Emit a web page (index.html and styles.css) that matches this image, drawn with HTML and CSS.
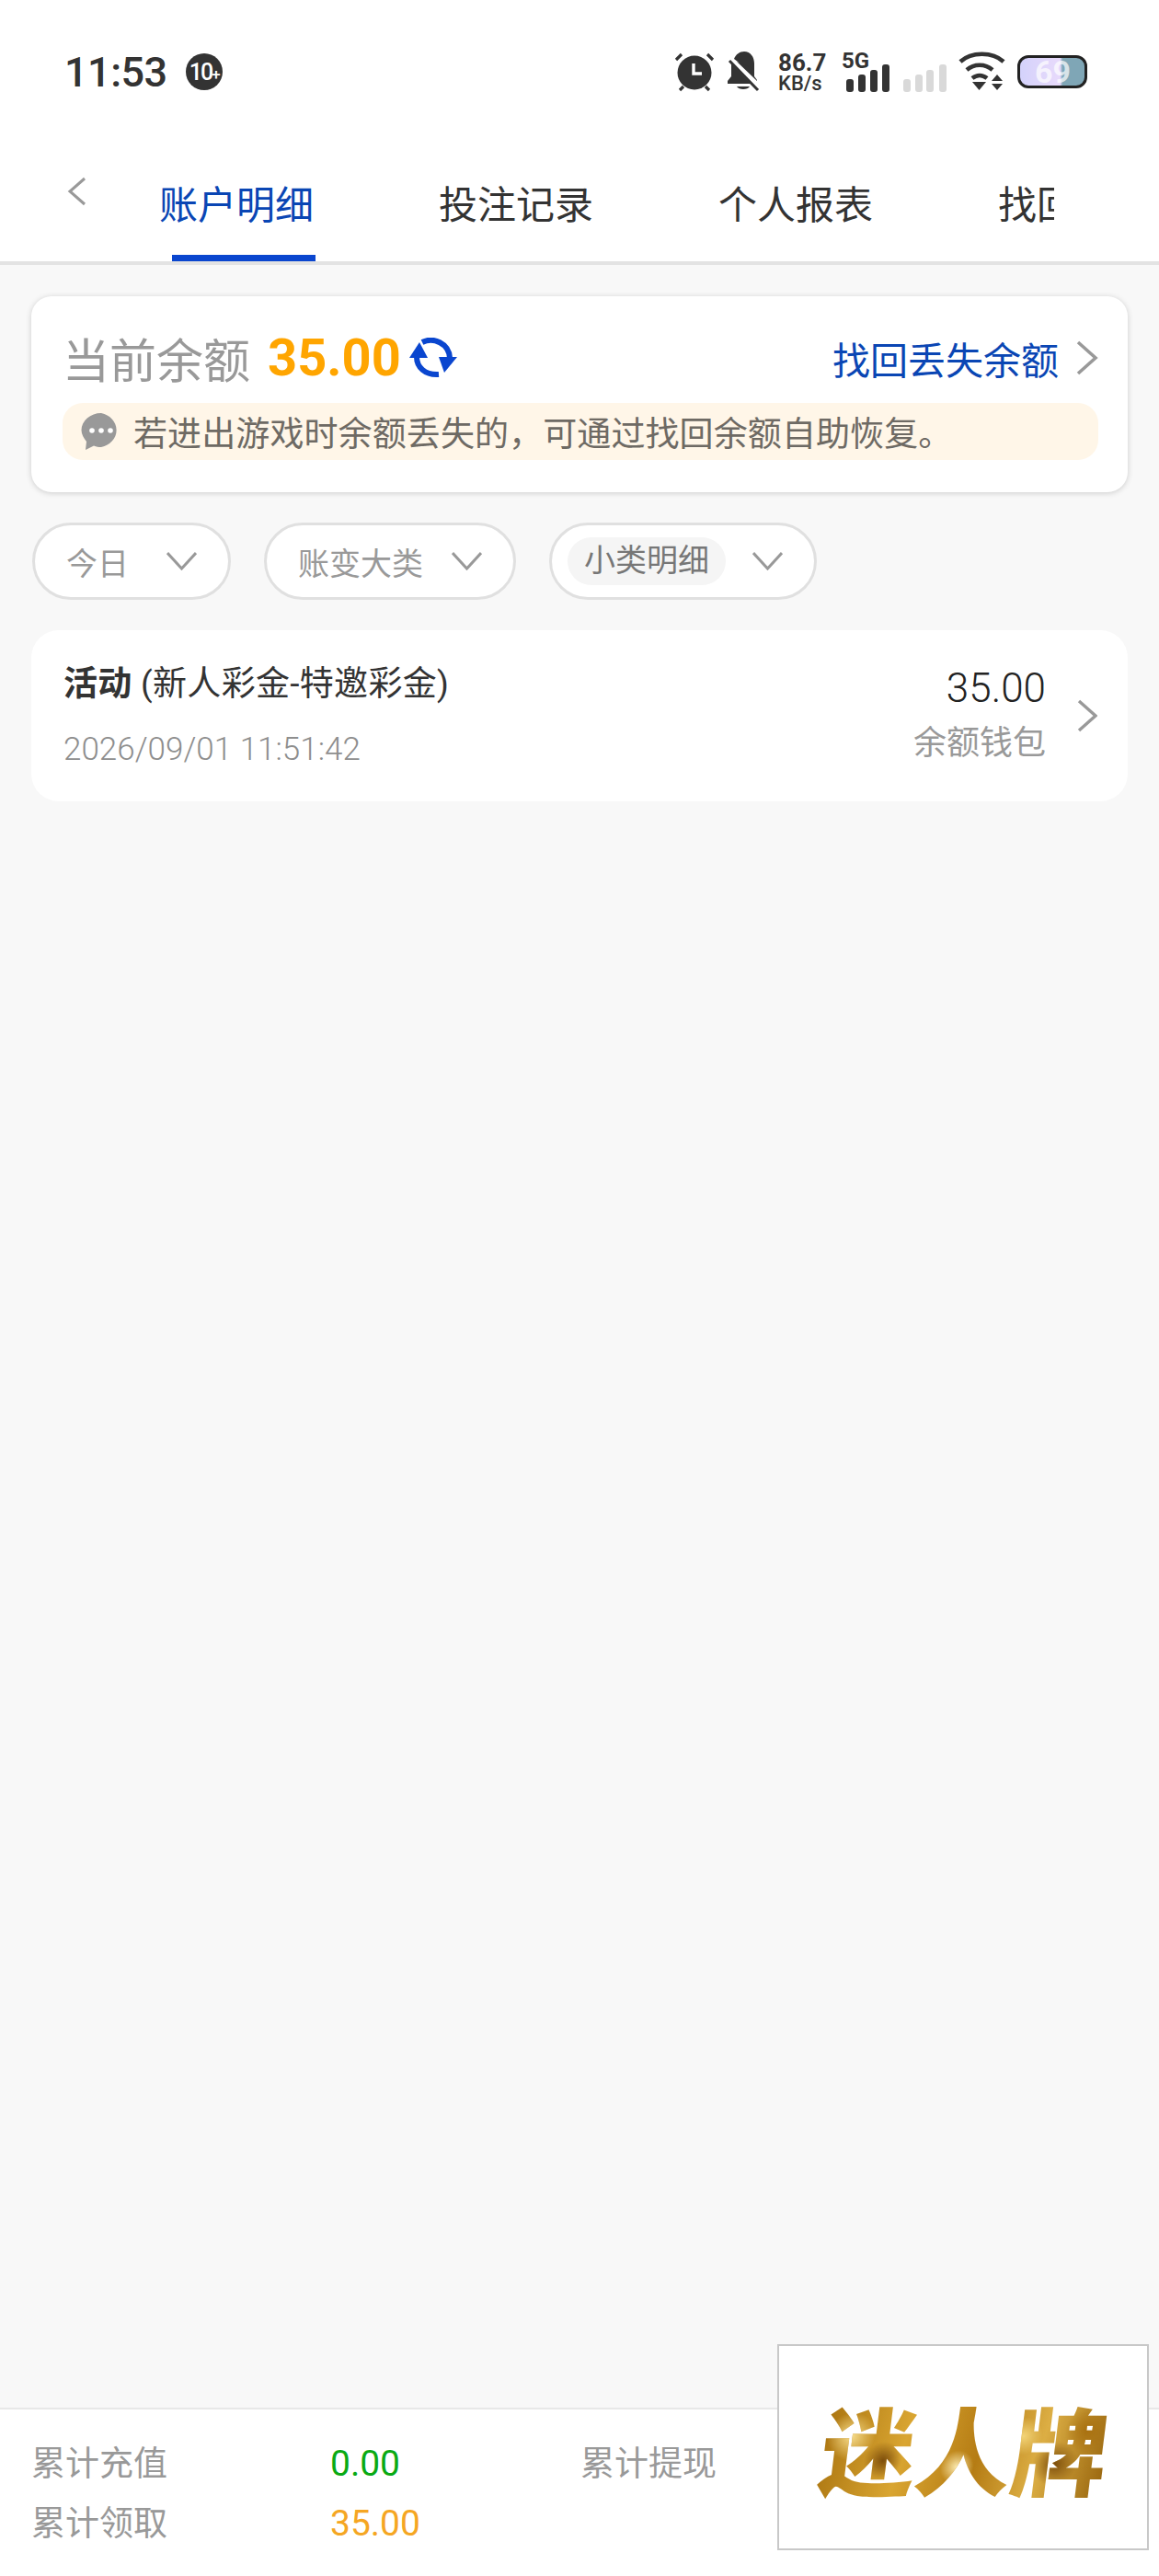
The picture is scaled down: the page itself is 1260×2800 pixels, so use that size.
FILE: index.html
```html
<!DOCTYPE html>
<html lang="zh-CN">
<head>
    <meta charset="UTF-8">
    <meta name="viewport" content="width=device-width, initial-scale=1.0">
    <title>账户明细</title>
    <link rel="stylesheet" href="styles.css">
</head>
<body>
    <header class="top">
        <div class="status">
            <span class="time">11:53</span>
            <span class="badge">10<i>+</i></span>
            <div class="status-right">
                <svg class="ico-alarm" width="44" height="44" viewBox="0 0 44 44">
                    <circle cx="22" cy="23" r="18.5" fill="#333"/>
                    <path d="M21 13v11h9" fill="none" stroke="#fff" stroke-width="3.4"/>
                    <path d="M2 9l6-6M42 9l-6-6M6 42l4-4M38 42l-4-4" fill="none" stroke="#333" stroke-width="3.2"/>
                </svg>
                <svg class="ico-bell" width="36" height="44" viewBox="0 0 36 44">
                    <path d="M3 10L34 42" stroke="#333" stroke-width="3" fill="none"/>
                    <path d="M8 8C10 3 14 0 19 0c7 0 11 6 11 13v12zM5 13l21 22H1v-3l4-5z" fill="#333"/>
                    <path d="M30 19v8l3 4v1L11 11z" fill="#333"/>
                    <path d="M11 38h14c-2 4-12 4-14 0z" fill="#333"/>
                </svg>
                <div class="speed"><b>86.7</b><b>KB/s</b></div>
                <svg class="ico-signal" width="49" height="44" viewBox="0 0 49 44">
                    <text x="-3" y="18" class="net">5G</text>
                    <rect x="2" y="30" width="8" height="14" rx="3" fill="#333"/>
                    <rect x="15" y="25" width="8" height="19" rx="3" fill="#333"/>
                    <rect x="28" y="20" width="8" height="24" rx="3" fill="#333"/>
                    <rect x="41" y="14" width="8" height="30" rx="3" fill="#333"/>
                </svg>
                <svg class="ico-signal2" width="47" height="44" viewBox="0 0 47 44">
                    <rect x="0" y="30" width="8" height="14" rx="3" fill="#d9d9d9"/>
                    <rect x="13" y="25" width="8" height="19" rx="3" fill="#d9d9d9"/>
                    <rect x="25" y="20" width="8" height="24" rx="3" fill="#d9d9d9"/>
                    <rect x="39" y="14" width="8" height="30" rx="3" fill="#d9d9d9"/>
                </svg>
                <svg class="ico-wifi" width="51" height="44" viewBox="0 0 51 44">
                    <path d="M2 11C14 0 37 0 49 11M9 20c8-7 20-7 28 0M15 29c5-4 11-4 16 0" fill="none" stroke="#333" stroke-width="4.6"/>
                    <path d="M15 33h15l-7.500 9z" fill="#333"/>
                    <path d="M36 32l6-7 6 7zM36 35h12l-6 7z" fill="#333"/>
                </svg>
                <div class="battery"><span class="battery-num">69</span></div>
            </div>
        </div>
        <nav class="tabs">
            <svg class="back" width="21" height="32" viewBox="0 0 21 32">
                <path d="M19 2L3 16l16 14" fill="none" stroke="#999" stroke-width="3"/>
            </svg>
            <div class="tab-list">
                <a class="tab active">账户明细</a>
                <a class="tab">投注记录</a>
                <a class="tab">个人报表</a>
                <a class="tab">找回丢失余额</a>
            </div>
        </nav>
    </header>

    <main class="main">
        <section class="card">
            <div class="balance-row">
                <span class="balance-label">当前余额</span>
                <span class="balance-num">35.00</span>
                <svg class="refresh" width="52" height="44" viewBox="0 0 52 44">
                    <path d="M8 21c0 11 9 20 24 19" fill="none" stroke="#0a46cf" stroke-width="6"/>
                    <path d="M11 5L0 22h20z" fill="#0a46cf"/>
                    <path d="M14 5c12-6 29 1 30 17" fill="none" stroke="#0a46cf" stroke-width="6"/>
                    <path d="M38 38L52 21H32z" fill="#0a46cf"/>
                </svg>
                <a class="recover">找回丢失余额</a>
                <svg class="arrow" width="24" height="38" viewBox="0 0 24 38">
                    <path d="M2 2l19 17L2 36" fill="none" stroke="#999" stroke-width="3.600"/>
                </svg>
            </div>
            <div class="notice">
                <svg width="44" height="40" viewBox="0 0 44 40">
                    <path d="M22 0a21.500 19 0 0 1 0 37c-3 0-5-.4-8-1.500L5 40l1-9C3 27 .5 23 .5 18.500A21.500 18.500 0 0 1 22 0z" fill="#999"/>
                    <circle cx="12" cy="19" r="2.800" fill="#fff"/>
                    <circle cx="22" cy="19" r="2.800" fill="#fff"/>
                    <circle cx="32" cy="19" r="2.800" fill="#fff"/>
                </svg>
                <span>若进出游戏时余额丢失的，可通过找回余额自助恢复。</span>
            </div>
        </section>

        <div class="filters">
            <div class="pill pill-day">
                <span>今日</span>
                <svg width="33" height="20" viewBox="0 0 33 20"><path d="M1 1l15.500 17L32 1" fill="none" stroke="#999" stroke-width="3"/></svg>
            </div>
            <div class="pill pill-big">
                <span>账变大类</span>
                <svg width="33" height="20" viewBox="0 0 33 20"><path d="M1 1l15.500 17L32 1" fill="none" stroke="#999" stroke-width="3"/></svg>
            </div>
            <div class="pill pill-small">
                <span class="chip">小类明细</span>
                <svg width="33" height="20" viewBox="0 0 33 20"><path d="M1 1l15.500 17L32 1" fill="none" stroke="#999" stroke-width="3"/></svg>
            </div>
        </div>

        <section class="record">
            <div class="record-left">
                <div class="record-title"><b>活动</b> (新人彩金-特邀彩金)</div>
                <div class="record-date">2026/09/01 11:51:42</div>
            </div>
            <div class="record-right">
                <div class="record-amount">35.00</div>
                <div class="record-wallet">余额钱包</div>
            </div>
            <svg class="record-arrow" width="22" height="36" viewBox="0 0 22 36">
                <path d="M2 2l18 16L2 34" fill="none" stroke="#999" stroke-width="3.400"/>
            </svg>
        </section>
    </main>

    <footer class="totals">
        <span class="total-label">累计充值</span>
        <span class="total-num green">0.00</span>
        <span class="total-label">累计提现</span>
        <span class="total-label">累计领取</span>
        <span class="total-num orange">35.00</span>
    </footer>

    <div class="float-logo"><span class="logo-text">迷人牌</span></div>
</body>
</html>
```
FILE: styles.css
```css
* {
    box-sizing: border-box;
}
body {
    margin: 0;
    height: 2800px;
    position: relative;
    display: flex;
    flex-direction: column;
    background: #f8f8f8;
    color: #333;
    font-family: Roboto, "Noto Sans CJK SC", sans-serif;
}

/* status bar + tabs */
.top {
    height: 288px;
    background: #fff;
    border-bottom: 4px solid #e3e3e3;
}
.status {
    height: 156px;
    display: flex;
    align-items: center;
    padding: 0 78px 0 70px;
}
.time {
    font-size: 45px;
    font-weight: 500;
    letter-spacing: -0.5px;
}
.badge {
    width: 40px;
    height: 40px;
    margin-left: 20px;
    border-radius: 50%;
    background: #333;
    color: #fff;
    font-size: 25px;
    font-weight: 500;
    letter-spacing: -2px;
    display: flex;
    align-items: center;
    justify-content: center;
}
.badge i {
    font-style: normal;
    font-size: 17px;
    margin-top: 6px;
}
.status-right {
    margin-left: auto;
    display: flex;
    align-items: center;
    gap: 13px;
}
.status-right svg {
    display: block;
}
.speed {
    width: 52px;
    margin-left: 7px;
    display: flex;
    flex-direction: column;
    align-items: flex-start;
}
.speed b {
    font-size: 26px;
    line-height: 25px;
    font-weight: 700;
    color: #333;
}
.speed b + b {
    font-size: 22px;
    line-height: 20px;
    font-weight: 500;
}
.net {
    font-family: Roboto, sans-serif;
    font-size: 24px;
    font-weight: 700;
    fill: #333;
}
.ico-signal {
    margin-left: 7px;
    overflow: visible;
}
.ico-signal2 {
    margin-left: 2px;
}
.battery {
    width: 76px;
    height: 36px;
    border: 3px solid #222;
    border-radius: 12px;
    background: linear-gradient(90deg, #d4d2fb 0%, #e8dafb 62%, #7fa6b6 66%, #7fa6b6 100%);
    display: flex;
    align-items: center;
    padding-left: 16px;
}
.battery-num {
    font-size: 34px;
    font-weight: 700;
    line-height: 30px;
    color: rgba(255, 255, 255, 0.7);
}

.tabs {
    display: flex;
    height: 128px;
    padding-left: 73px;
}
.back {
    display: block;
    margin-top: 36px;
}
.tab-list {
    width: 1052px;
    overflow: hidden;
    display: flex;
    gap: 136px;
    padding-left: 79px;
}
.tab {
    flex: none;
    position: relative;
    height: 128px;
    width: 168px;
    padding-top: 42px;
    font-size: 42px;
    line-height: 52px;
    white-space: nowrap;
}
.tab-list .tab:last-child {
    width: auto;
}
.tab.active {
    color: #0a46b4;
}
.tab.active::after {
    content: "";
    position: absolute;
    left: 14px;
    bottom: 0;
    width: 156px;
    height: 7px;
    background: #0a46cf;
}

/* balance card */
.main {
    flex: 1;
    padding: 34px 34px 0;
}
.card {
    height: 213px;
    padding: 36px 32px 0 34px;
    background: #fff;
    border-radius: 22px;
    box-shadow: 0 1px 6px rgba(0, 0, 0, 0.18);
}
.balance-row {
    height: 62px;
    display: flex;
    align-items: center;
}
.balance-label {
    font-size: 51px;
    color: #999;
}
.balance-num {
    margin-left: 19px;
    font-size: 56px;
    font-weight: 700;
    color: #ffa500;
}
.refresh {
    margin-left: 9px;
}
.recover {
    margin-left: auto;
    font-size: 41px;
    color: #0a46b4;
}
.arrow {
    margin-left: 19px;
}
.notice {
    height: 62px;
    margin-top: 18px;
    padding-left: 20px;
    border-radius: 22px;
    background: #fff6e8;
    display: flex;
    align-items: center;
    gap: 13px;
    font-size: 37px;
    letter-spacing: 0.1px;
    color: #6e6a64;
}

/* filter pills */
.filters {
    display: flex;
    gap: 36px;
    margin: 33px 0 0 1px;
}
.pill {
    height: 84px;
    padding: 0 34px;
    background: #fff;
    border: 3px solid #e0e0e0;
    border-radius: 42px;
    display: flex;
    align-items: center;
    justify-content: space-between;
    font-size: 34px;
    color: #999;
}
.pill-day {
    width: 216px;
}
.pill-big {
    width: 274px;
}
.pill-small {
    width: 291px;
    padding-left: 17px;
}
.chip {
    height: 52px;
    line-height: 50px;
    padding: 0 18px;
    border-radius: 26px;
    background: #f5f5f5;
    color: #777;
}

/* record row */
.record {
    height: 186px;
    margin-top: 33px;
    padding-left: 35px;
    padding-right: 33px;
    background: #fff;
    border-radius: 30px;
    display: flex;
    align-items: center;
}
.record-left {
    flex: 1;
}
.record-title {
    font-size: 37px;
    letter-spacing: 0.3px;
    line-height: 50px;
    margin-top: -2px;
}
.record-date {
    margin-top: 26px;
    font-size: 35px;
    font-weight: 300;
    line-height: 40px;
    color: #8e8e8e;
}
.record-right {
    text-align: right;
}
.record-amount {
    font-size: 44px;
    font-weight: 300;
    line-height: 50px;
    color: #222;
}
.record-wallet {
    margin-top: 10px;
    font-size: 36px;
    line-height: 50px;
    color: #999;
}
.record-arrow {
    margin-left: 34px;
}

/* bottom totals */
.totals {
    height: 183px;
    padding: 26px 0 0 34px;
    background: #fff;
    border-top: 2px solid #e8e8e8;
    display: grid;
    grid-template-columns: 325px 272px 1fr;
    grid-auto-rows: 65px;
    align-items: center;
}
.total-label {
    margin-bottom: 6px;
    font-size: 37px;
    color: #999;
}
.total-num {
    font-size: 39px;
}
.green {
    color: #0aaa14;
}
.orange {
    color: #f5a623;
}

/* floating ad over the totals */
.float-logo {
    position: absolute;
    right: 11px;
    bottom: 28px;
    width: 404px;
    height: 224px;
    background: #fff;
    border: 2px solid #c8c8c8;
    display: flex;
    align-items: center;
    justify-content: center;
}
.logo-text {
    font-family: "Noto Sans CJK SC", sans-serif;
    font-size: 104px;
    line-height: 120px;
    font-weight: 900;
    margin-left: 4px;
    transform: skewX(-7deg);
    color: transparent;
    background:
        radial-gradient(circle at 10% 40%, #f7dd8c 0, transparent 9%),
        radial-gradient(circle at 22% 62%, #7d4e0c 0, transparent 8%),
        radial-gradient(circle at 36% 45%, #fbeab0 0, transparent 8%),
        radial-gradient(circle at 48% 68%, #fbeab0 0, transparent 10%),
        radial-gradient(circle at 58% 30%, #8a5a10 0, transparent 7%),
        radial-gradient(circle at 70% 40%, #f3d478 0, transparent 9%),
        radial-gradient(circle at 82% 65%, #7d4e0c 0, transparent 9%),
        radial-gradient(circle at 92% 35%, #a87010 0, transparent 8%),
        linear-gradient(100deg, #a8720f, #d9a531 30%, #b57c14 55%, #dcae44 75%, #96630c);
    -webkit-background-clip: text;
    background-clip: text;
}
```
